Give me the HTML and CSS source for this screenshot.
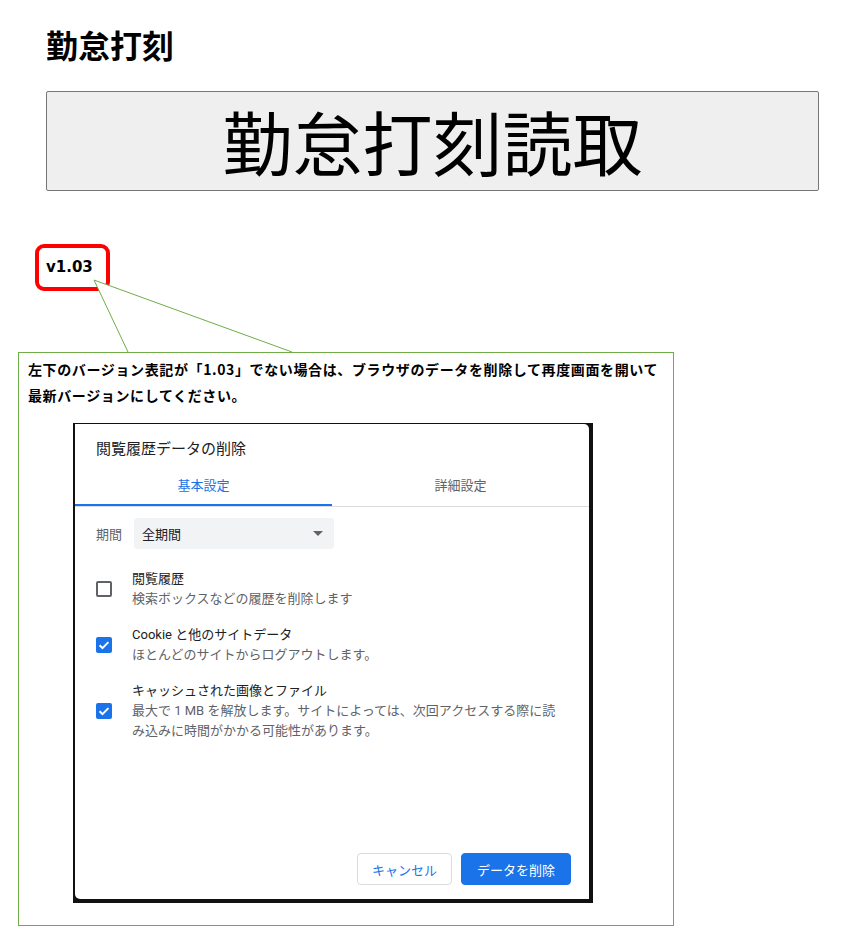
FILE: index.html
```html
<!DOCTYPE html>
<html lang="ja">
<head>
  <meta charset="UTF-8">
  <meta name="viewport" content="width=device-width, initial-scale=1.0">
  <title>勤怠打刻</title>
  <link rel="stylesheet" href="styles.css">
</head>
<body>
  <div class="page">
    <h1 class="title">勤怠打刻</h1>
    <button class="read-btn">勤怠打刻読取</button>
  </div>

  <div class="annot">
    <div class="version">v1.03</div>

    <svg class="pointer" width="300" height="108" viewBox="0 0 300 108">
      <polygon points="94,36 128,108 292,108" fill="#fff"/>
      <polyline points="128,108 94,36 292,108" fill="none" stroke="#70ad47" stroke-width="1"/>
    </svg>

    <div class="callout">
      <p class="callout-text">左下のバージョン表記が「1.03」でない場合は、ブラウザのデータを削除して再度画面を開いて<br>最新バージョンにしてください。</p>

      <div class="shot">
        <div class="dialog">
          <div class="dialog-title">閲覧履歴データの削除</div>
          <div class="tabs">
            <div class="tab active">基本設定</div>
            <div class="tab">詳細設定</div>
          </div>

          <div class="period">
            <span class="period-label">期間</span>
            <div class="select">
              <span>全期間</span>
              <span class="arrow"></span>
            </div>
          </div>

          <div class="option">
            <span class="check"></span>
            <div class="option-text">
              <div class="option-name">閲覧履歴</div>
              <div class="option-desc">検索ボックスなどの履歴を削除します</div>
            </div>
          </div>
          <div class="option">
            <span class="check on">
              <svg width="16" height="16" viewBox="0 0 16 16"><path d="M3.6 8.2l2.9 2.9 5.9-6" fill="none" stroke="#fff" stroke-width="2"/></svg>
            </span>
            <div class="option-text">
              <div class="option-name">Cookie と他のサイトデータ</div>
              <div class="option-desc">ほとんどのサイトからログアウトします。</div>
            </div>
          </div>
          <div class="option">
            <span class="check on">
              <svg width="16" height="16" viewBox="0 0 16 16"><path d="M3.6 8.2l2.9 2.9 5.9-6" fill="none" stroke="#fff" stroke-width="2"/></svg>
            </span>
            <div class="option-text">
              <div class="option-name">キャッシュされた画像とファイル</div>
              <div class="option-desc">最大で 1 MB を解放します。サイトによっては、次回アクセスする際に読<br>み込みに時間がかかる可能性があります。</div>
            </div>
          </div>

          <div class="dialog-footer">
            <button class="btn">キャンセル</button>
            <button class="btn primary">データを削除</button>
          </div>
        </div>
      </div>
    </div>
  </div>
</body>
</html>
```

FILE: styles.css
```css
body {
  margin: 0;
  font-family: "Noto Sans CJK JP", sans-serif;
  color: #000;
  background: #fff;
}
.page {
  padding: 25px 25px 0 46px;
}
.title {
  margin: 0;
  font-size: 32px;
  font-weight: bold;
  line-height: 38px;
}
.read-btn {
  display: block;
  width: 100%;
  height: 100px;
  margin-top: 28px;
  padding: 0;
  font-family: "Noto Sans CJK JP", sans-serif;
  font-size: 70px;
  line-height: 1;
  color: #000;
  background-color: #efefef;
  border: 1px solid #767676;
  border-radius: 2px;
}

.annot {
  position: relative;
  margin-top: 53px;
  padding-left: 18px;
  padding-bottom: 20px;
}
.version {
  width: 67px;
  height: 39px;
  margin-left: 17px;
  box-sizing: content-box;
  border: 4px solid #ff0000;
  border-radius: 9px;
  font-family: "DejaVu Sans", sans-serif;
  font-size: 15px;
  font-weight: bold;
  line-height: 39px;
  text-indent: 7px;
}
.pointer {
  position: absolute;
  left: 0;
  top: 0;
}
.callout {
  width: 654px;
  height: 572px;
  margin-top: 61px;
  border: 1px solid #70ad47;
}
.callout-text {
  margin: 3px 0 0 9px;
  font-size: 14px;
  font-weight: bold;
  letter-spacing: 0.62px;
  line-height: 26px;
  white-space: nowrap;
}

.shot {
  width: 514px;
  height: 475px;
  margin: 15px 0 0 54px;
  padding: 1px 4px 4px 2px;
  background: #111;
}
.dialog {
  display: flex;
  flex-direction: column;
  height: 100%;
  background: #fff;
  border-radius: 0 5px 0 5px;
  font-family: Roboto, "Noto Sans CJK JP", sans-serif;
  font-size: 13px;
  color: #202124;
}
.dialog-title {
  padding: 15px 0 0 21px;
  font-size: 15px;
  line-height: 20px;
}
.tabs {
  display: flex;
  border-bottom: 1px solid #dadce0;
}
.tab {
  flex: 1;
  padding: 17px 0 10px;
  text-align: center;
  line-height: 20px;
  color: #5f6368;
}
.tab.active {
  color: #1a73e8;
  box-shadow: inset 0 -2px 0 #1a73e8;
}
.period {
  display: flex;
  align-items: center;
  gap: 12px;
  margin: 11px 0 0 21px;
}
.period-label {
  color: #5f6368;
}
.select {
  display: flex;
  align-items: center;
  justify-content: space-between;
  width: 200px;
  height: 31px;
  padding: 0 8px;
  box-sizing: border-box;
  background: #f1f3f4;
  border-radius: 4px;
}
.arrow {
  width: 0;
  height: 0;
  margin-right: 3px;
  border-left: 5px solid transparent;
  border-right: 5px solid transparent;
  border-top: 5px solid #5f6368;
}
.option {
  display: flex;
  align-items: center;
  gap: 20px;
  margin: 16px 0 0 21px;
}
.period + .option {
  margin-top: 20px;
}
.check {
  flex: none;
  width: 16px;
  height: 16px;
  box-sizing: border-box;
  border: 2px solid #5f6368;
  border-radius: 2px;
}
.check.on {
  border: none;
  background: #1a73e8;
}
.check svg {
  display: block;
}
.option-text {
  line-height: 20px;
}
.option-desc {
  color: #5f6368;
}
.dialog-footer {
  display: flex;
  justify-content: flex-end;
  gap: 9px;
  margin-top: auto;
  padding: 0 18px 14px 0;
}
.btn {
  height: 32px;
  padding: 0 14px;
  font-family: Roboto, "Noto Sans CJK JP", sans-serif;
  font-size: 13px;
  color: #1a73e8;
  background: #fff;
  border: 1px solid #dadce0;
  border-radius: 4px;
}
.btn.primary {
  padding: 0 15px;
  color: #fff;
  background: #1a73e8;
  border-color: #1a73e8;
}
```
